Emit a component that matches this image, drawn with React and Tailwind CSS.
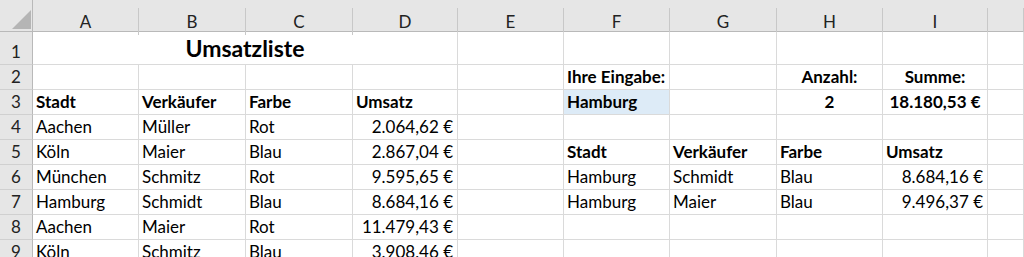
const cols = ["A", "B", "C", "D", "E", "F", "G", "H", "I", ""];

// each row: [A, B, C, D, E, F, G, H, I, J]; cell = string or {t, b, align, bg}
const rows = [
  { n: 1, h: "h-[33px]" },
  {
    n: 2,
    cells: [null, null, null, null, null, { t: "Ihre Eingabe:", b: true }, null, { t: "Anzahl:", b: true, align: "c" }, { t: "Summe:", b: true, align: "c" }, null],
  },
  {
    n: 3,
    cells: [
      { t: "Stadt", b: true },
      { t: "Verkäufer", b: true },
      { t: "Farbe", b: true },
      { t: "Umsatz", b: true },
      null,
      { t: "Hamburg", b: true, bg: true },
      null,
      { t: "2", b: true, align: "c" },
      { t: "18.180,53 €", b: true, align: "c" },
      null,
    ],
  },
  { n: 4, cells: ["Aachen", "Müller", "Rot", { t: "2.064,62 €", align: "r" }, null, null, null, null, null, null] },
  {
    n: 5,
    cells: [
      "Köln",
      "Maier",
      "Blau",
      { t: "2.867,04 €", align: "r" },
      null,
      { t: "Stadt", b: true },
      { t: "Verkäufer", b: true },
      { t: "Farbe", b: true },
      { t: "Umsatz", b: true },
      null,
    ],
  },
  {
    n: 6,
    cells: ["München", "Schmitz", "Rot", { t: "9.595,65 €", align: "r" }, null, "Hamburg", "Schmidt", "Blau", { t: "8.684,16 €", align: "r" }, null],
  },
  {
    n: 7,
    cells: ["Hamburg", "Schmidt", "Blau", { t: "8.684,16 €", align: "r" }, null, "Hamburg", "Maier", "Blau", { t: "9.496,37 €", align: "r" }, null],
  },
  { n: 8, cells: ["Aachen", "Maier", "Rot", { t: "11.479,43 €", align: "r" }, null, null, null, null, null, null] },
  { n: 9, cells: ["Köln", "Schmitz", "Blau", { t: "3.908,46 €", align: "r" }, null, null, null, null, null, null] },
];

const gridCols =
  "grid grid-cols-[33px_106px_107px_107px_105px_106px_106px_107px_106px_105px_1fr]";

function Cell({ c }) {
  if (!c) return <div className="border-r border-b border-[#dadada] h-full" />;
  const cell = typeof c === "string" ? { t: c } : c;
  const align =
    cell.align === "r" ? "justify-end pr-[4px]" : cell.align === "c" ? "justify-center" : "justify-start pl-[3px]";
  return (
    <div
      className={
        "flex items-end h-full border-r border-b border-[#dadada] pb-[1px] whitespace-nowrap overflow-visible text-[17px] leading-[22px] text-black " +
        align +
        (cell.b ? " font-bold" : "") +
        (cell.bg ? " bg-[#ddebf7]" : "")
      }
    >
      {cell.t}
    </div>
  );
}

export default function App() {
  return (
    <div
      className="w-[1024px] h-[257px] overflow-hidden bg-white select-none"
      style={{ fontFamily: 'Lato, "Open Sans", sans-serif' }}
    >
      {/* column headers */}
      <div className={gridCols + " h-[32px] bg-[#e6e6e6] border-b border-[#b9b9b9]"}>
        <div className="relative border-r border-[#b9b9b9]">
          <svg className="absolute left-[12px] top-[10px]" width="19" height="19" viewBox="0 0 19 19">
            <polygon points="19,0 19,19 0,19" fill="#b5b5b5" />
          </svg>
        </div>
        {cols.map((l, i) => (
          <div key={i} className="flex flex-col">
            <div className="h-[8px]" />
            <div className="flex-1 flex items-center justify-center border-r border-[#c8c8c8] text-[17px] text-[#222] pt-[1px]">
              {l}
            </div>
          </div>
        ))}
      </div>

      {rows.map((r) => (
        <div key={r.n} className={gridCols + " " + (r.h || "h-[25px]")}>
          <div className="flex items-end justify-center bg-[#e6e6e6] border-r border-[#b9b9b9] border-b border-b-[#d0d0d0] text-[17px] leading-[22px] text-[#222] pb-[1px]">
            {r.n}
          </div>
          {r.n === 1 ? (
            <>
              <div className="col-span-4 flex items-end justify-center border-r border-b border-[#dadada] pb-[2px] text-[23px] leading-[28px] font-bold text-black">
                Umsatzliste
              </div>
              {[0, 1, 2, 3, 4, 5].map((i) => (
                <Cell key={i} c={null} />
              ))}
            </>
          ) : (
            r.cells.map((c, i) => <Cell key={i} c={c} />)
          )}
        </div>
      ))}
    </div>
  );
}
